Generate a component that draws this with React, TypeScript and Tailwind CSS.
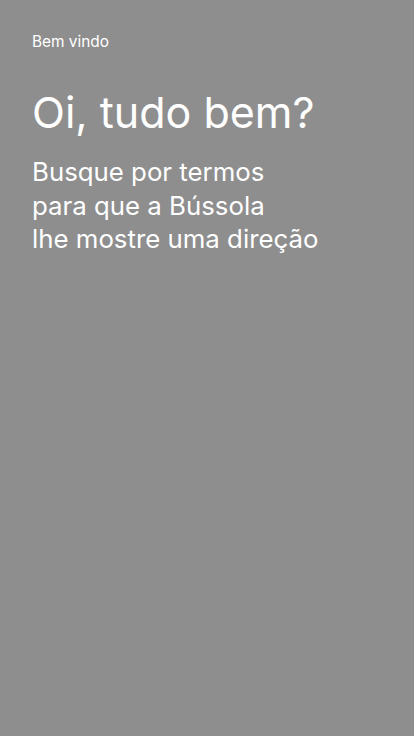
export default function App() {
  return (
    <div className="min-h-[736px] w-full bg-[#8e8e8e] px-8 pt-[32px] text-white font-['Inter',sans-serif]">
      <p className="text-[15.4px] leading-[20px]">Bem vindo</p>
      <h1 className="mt-[34px] text-[43px] leading-[52px] font-normal">Oi, tudo bem?</h1>
      <p className="mt-[17px] text-[25.8px] leading-[33.5px]">
        Busque por termos
        <br />
        para que a Bússola
        <br />
        lhe mostre uma direção
      </p>
    </div>
  );
}
